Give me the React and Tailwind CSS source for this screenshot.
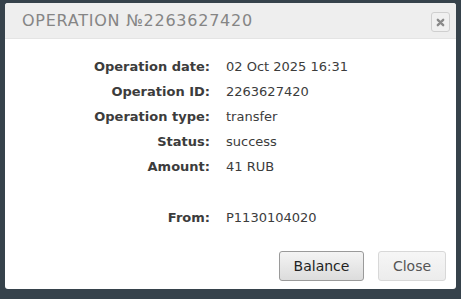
export default function App() {
  const rows = [
    ["Operation date:", "02 Oct 2025 16:31"],
    ["Operation ID:", "2263627420"],
    ["Operation type:", "transfer"],
    ["Status:", "success"],
    ["Amount:", "41 RUB"],
  ];
  return (
    <div className="w-[461px] h-[299px] bg-[#36424b] pt-[3px] pl-[5px]">
      <div className="w-[451px] h-[286px] bg-white rounded-[3px] flex flex-col overflow-hidden">
        <div className="h-[36px] bg-[#eeeeee] flex items-center justify-between pl-[17px] pr-[6px] border-b border-[#e4e4e4]">
          <span className="text-[16px] tracking-[0.75px] text-[#858585] font-medium pt-[1px]" style={{ fontFamily: '"DejaVu Sans", sans-serif' }}>
            OPERATION №2263627420
          </span>
          <button className="w-[19px] h-[20px] mt-[3px] rounded-[3px] border border-[#cfcfcf] bg-[#f0f0f0] flex items-center justify-center">
            <svg width="9" height="9" viewBox="0 0 10 10">
              <path d="M2 2 L8 8 M8 2 L2 8" stroke="#8a8a8a" strokeWidth="2.6" strokeLinecap="round" />
            </svg>
          </button>
        </div>
        <div className="flex-1 pt-[15px]" style={{ fontFamily: '"DejaVu Sans", sans-serif' }}>
          {rows.map(([l, v]) => (
            <div key={l} className="flex h-[25px] items-center text-[13px]">
              <div className="w-[205px] text-right font-semibold text-[#3c3c3c]">{l}</div>
              <div className="pl-[16px] text-[#3c3c3c]">{v}</div>
            </div>
          ))}
          <div className="h-[26px]" />
          <div className="flex h-[25px] items-center text-[13px]">
            <div className="w-[205px] text-right font-semibold text-[#3c3c3c]">From:</div>
            <div className="pl-[16px] text-[#3c3c3c]">P1130104020</div>
          </div>
        </div>
        <div className="flex justify-end gap-[14px] pr-[10px] pb-[8px]" style={{ fontFamily: '"DejaVu Sans", Verdana, sans-serif' }}>
          <button className="w-[85px] h-[30px] rounded-[3px] border border-[#9a9a9a] bg-gradient-to-b from-[#f4f4f4] to-[#dcdcdc] text-[14px] text-[#222]">
            Balance
          </button>
          <button className="w-[68px] h-[30px] rounded-[3px] border border-[#d8d8d8] bg-gradient-to-b from-[#f6f6f6] to-[#ececec] text-[14px] text-[#555]">
            Close
          </button>
        </div>
      </div>
    </div>
  );
}
